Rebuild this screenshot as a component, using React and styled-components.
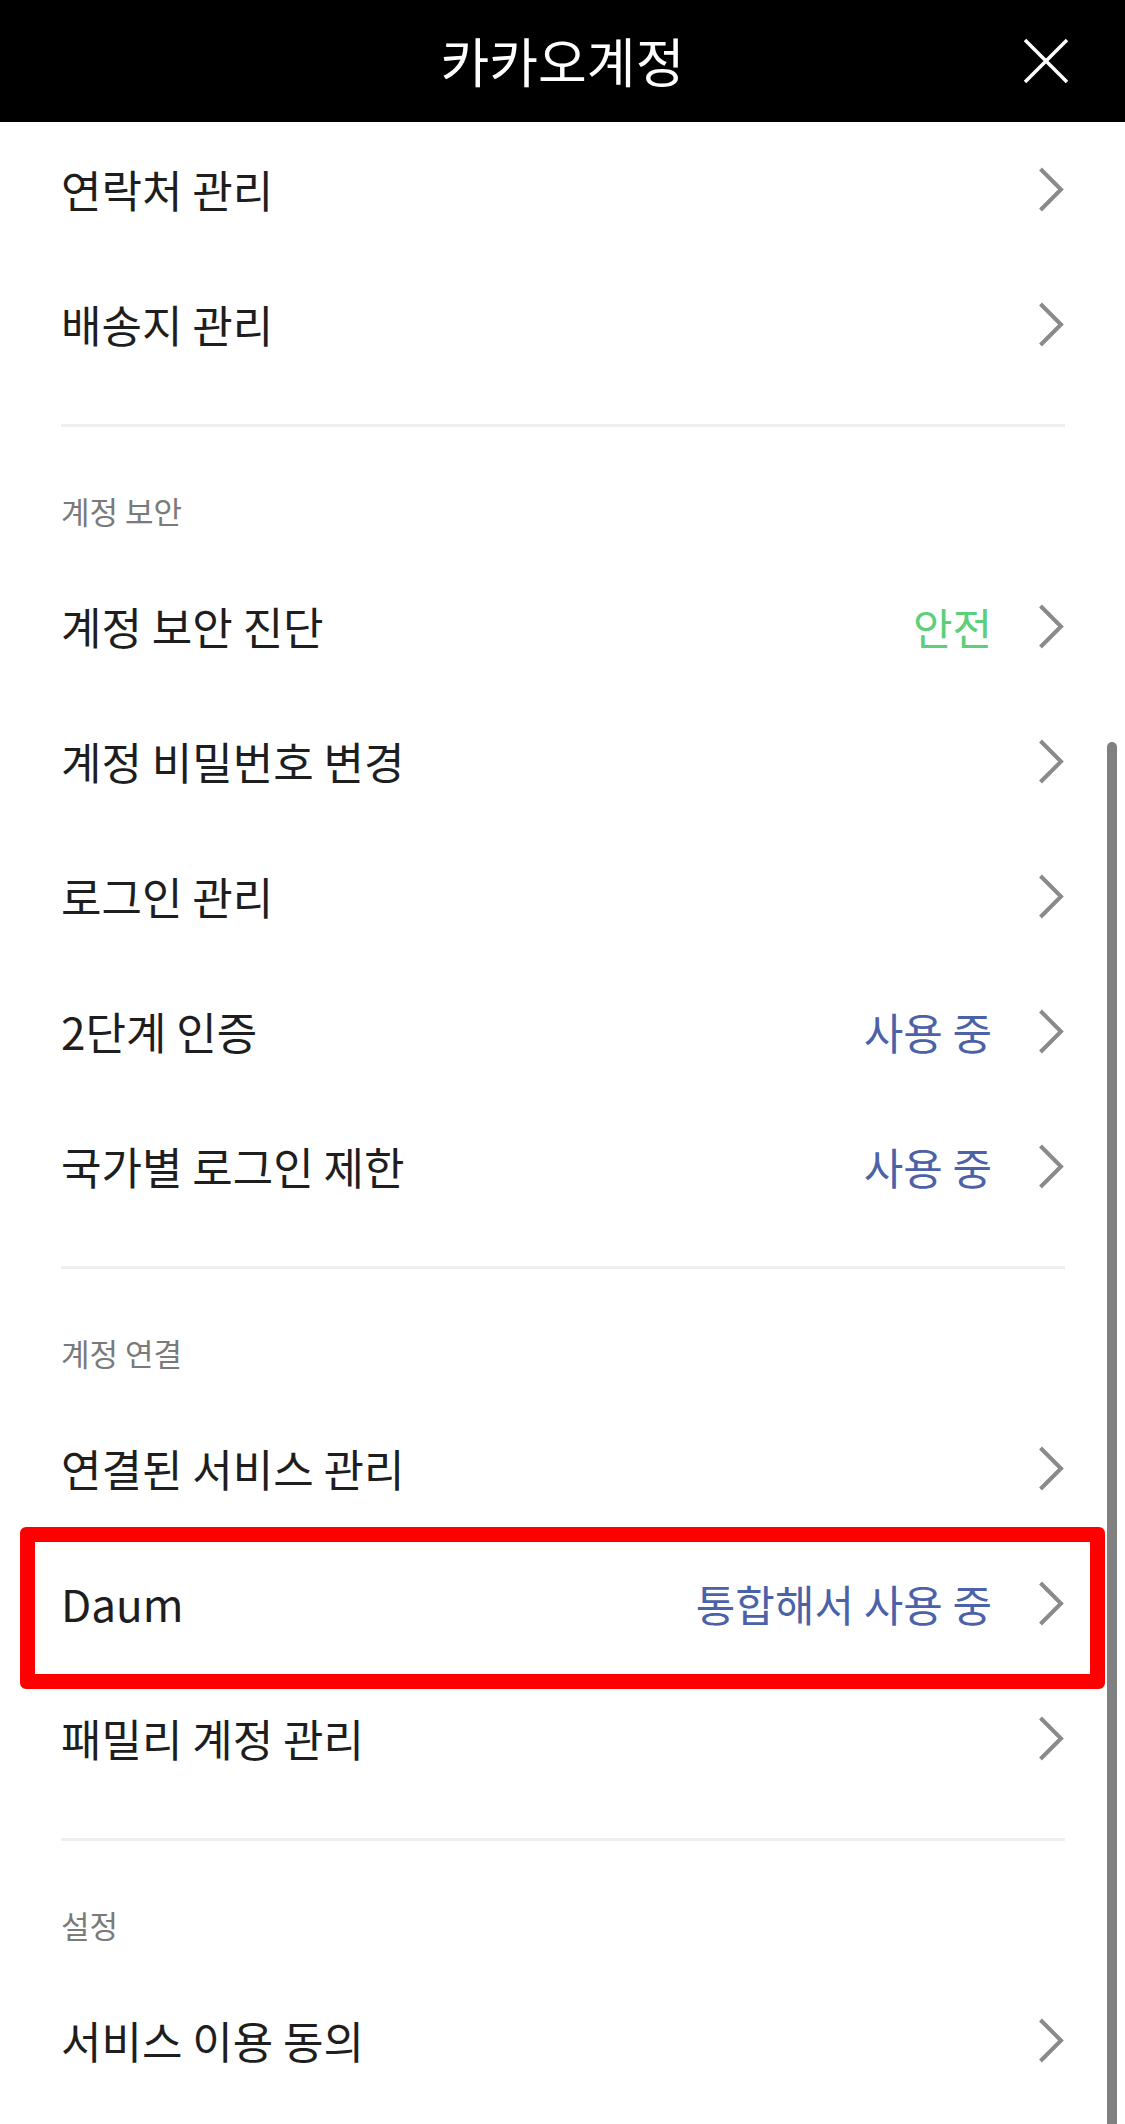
import React from "react";
import styled, { createGlobalStyle } from "styled-components";

const Global = createGlobalStyle`
  html, body { margin: 0; padding: 0; background: #fff; }
  body { font-family: "Noto Sans CJK KR", "Noto Sans", sans-serif; -webkit-font-smoothing: antialiased; }
  * { box-sizing: border-box; }
`;

const Page = styled.div`
  position: relative;
  width: 1125px;
  height: 2124px;
  overflow: hidden;
  background: #fff;
`;

const Header = styled.header`
  height: 122px;
  background: #000;
  display: grid;
  grid-template-columns: 1fr auto 1fr;
  align-items: center;
  padding: 0 56px;
`;

const Title = styled.h1`
  grid-column: 2;
  margin: 0;
  font-size: 53px;
  font-weight: 400;
  line-height: 1.2;
  color: #fff;
  letter-spacing: 0;
`;

const CloseBtn = styled.button`
  grid-column: 3;
  justify-self: end;
  width: 46px;
  height: 46px;
  padding: 0;
  border: 0;
  background: transparent;
  display: flex;
  align-items: center;
  justify-content: center;
`;

const Section = styled.section`
  display: flex;
  flex-direction: column;
`;

const Divider = styled.hr`
  margin: 32px 60px 0 61px;
  border: 0;
  height: 3px;
  background: #efefef;
`;

const Label = styled.div`
  padding: 66px 61px 30px;
  font-size: 31px;
  line-height: 36px;
  color: #7a7a7a;
`;

const Row = styled.div`
  position: relative;
  height: 135px;
  padding: 0 61px;
  display: flex;
  align-items: center;
`;

const RowTitle = styled.span`
  flex: 1;
  font-size: 44px;
  line-height: 1.2;
  color: #1e1e1e;
`;

const Value = styled.span`
  font-size: 43px;
  line-height: 1.2;
  margin-right: 46px;
  color: ${(p) => (p.$tone === "green" ? "#5ccf7b" : "#4c62a8")};
`;

const Highlight = styled.div`
  position: absolute;
  top: -9px;
  bottom: -18px;
  left: 20px;
  right: 20px;
  border: 15px solid #ff0000;
  border-radius: 6px;
  pointer-events: none;
`;

const Scrollbar = styled.div`
  position: absolute;
  top: 742px;
  right: 8px;
  bottom: 0;
  width: 10px;
  border-radius: 5px 5px 0 0;
  background: #808080;
`;

const Chevron = () => (
  <svg width="26" height="45" viewBox="0 0 26 45" aria-hidden="true">
    <polyline
      points="2.5,2 23,22.5 2.5,43"
      fill="none"
      stroke="#8a8a8a"
      strokeWidth="4"
    />
  </svg>
);

const CloseIcon = () => (
  <svg width="46" height="46" viewBox="0 0 46 46" aria-hidden="true">
    <path d="M2 2 L44 44 M44 2 L2 44" stroke="#fff" strokeWidth="3.5" />
  </svg>
);

const Item = ({ title, value, tone, highlight }) => (
  <Row>
    <RowTitle>{title}</RowTitle>
    {value && <Value $tone={tone}>{value}</Value>}
    <Chevron />
    {highlight && <Highlight />}
  </Row>
);

const sections = [
  {
    label: null,
    items: [{ title: "연락처 관리" }, { title: "배송지 관리" }],
  },
  {
    label: "계정 보안",
    items: [
      { title: "계정 보안 진단", value: "안전", tone: "green" },
      { title: "계정 비밀번호 변경" },
      { title: "로그인 관리" },
      { title: "2단계 인증", value: "사용 중", tone: "blue" },
      { title: "국가별 로그인 제한", value: "사용 중", tone: "blue" },
    ],
  },
  {
    label: "계정 연결",
    items: [
      { title: "연결된 서비스 관리" },
      { title: "Daum", value: "통합해서 사용 중", tone: "blue", highlight: true },
      { title: "패밀리 계정 관리" },
    ],
  },
  {
    label: "설정",
    items: [{ title: "서비스 이용 동의" }],
  },
];

export default function App() {
  return (
    <>
      <Global />
      <Page>
        <Header>
          <Title>카카오계정</Title>
          <CloseBtn aria-label="닫기">
            <CloseIcon />
          </CloseBtn>
        </Header>
        {sections.map((s, i) => (
          <React.Fragment key={i}>
            {i > 0 && <Divider />}
            <Section>
              {s.label && <Label>{s.label}</Label>}
              {s.items.map((it) => (
                <Item key={it.title} {...it} />
              ))}
            </Section>
          </React.Fragment>
        ))}
        <Scrollbar />
      </Page>
    </>
  );
}
